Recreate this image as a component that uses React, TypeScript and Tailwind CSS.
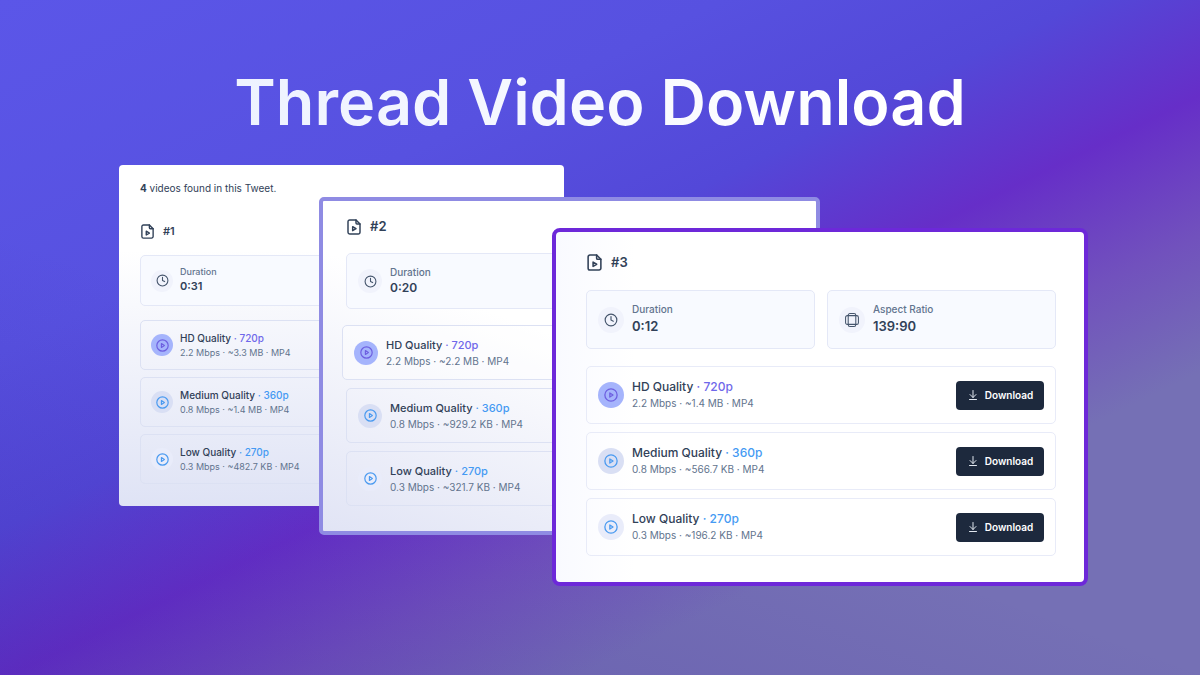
import { ArrowDownToLine, Clock } from 'lucide-react';
import clsx from 'clsx';

type Size = 'sm' | 'md' | 'lg';
type Tone = 'hd' | 'medium' | 'low';

interface Quality {
  tone: Tone;
  label: string;
  resolution: string;
  details: string;
  active?: boolean;
}

interface Video {
  id: number;
  size: Size;
  duration: string;
  aspectRatio?: string;
  downloadable?: boolean;
  qualities: Quality[];
}

const videos: Video[] = [
  {
    id: 1,
    size: 'sm',
    duration: '0:31',
    qualities: [
      { tone: 'hd', label: 'HD Quality', resolution: '720p', details: '2.2 Mbps · ~3.3 MB · MP4' },
      { tone: 'medium', label: 'Medium Quality', resolution: '360p', details: '0.8 Mbps · ~1.4 MB · MP4' },
      { tone: 'low', label: 'Low Quality', resolution: '270p', details: '0.3 Mbps · ~482.7 KB · MP4' }
    ]
  },
  {
    id: 2,
    size: 'md',
    duration: '0:20',
    qualities: [
      { tone: 'hd', label: 'HD Quality', resolution: '720p', details: '2.2 Mbps · ~2.2 MB · MP4', active: true },
      { tone: 'medium', label: 'Medium Quality', resolution: '360p', details: '0.8 Mbps · ~929.2 KB · MP4' },
      { tone: 'low', label: 'Low Quality', resolution: '270p', details: '0.3 Mbps · ~321.7 KB · MP4' }
    ]
  },
  {
    id: 3,
    size: 'lg',
    duration: '0:12',
    aspectRatio: '139:90',
    downloadable: true,
    qualities: [
      { tone: 'hd', label: 'HD Quality', resolution: '720p', details: '2.2 Mbps · ~1.4 MB · MP4' },
      { tone: 'medium', label: 'Medium Quality', resolution: '360p', details: '0.8 Mbps · ~566.7 KB · MP4' },
      { tone: 'low', label: 'Low Quality', resolution: '270p', details: '0.3 Mbps · ~196.2 KB · MP4' }
    ]
  }
];

const sizes = {
  sm: {
    card: 'col-start-1 col-end-4 rounded bg-linear-to-b from-white from-25% to-[#dfe3f5] px-[21px] pt-4 pb-[22px]',
    heading: 'mb-[15px] h-[17px] gap-2 text-[11px]',
    fileIcon: 'size-[15px]',
    statGap: 'mb-[14px]',
    stat: 'h-[51px]',
    rows: 'gap-[7px]',
    row: 'h-[50px] border-[#dce1f3]',
    box: 'gap-[7px] px-[10px]',
    circle: 'size-[22px]',
    icon: 'size-[13px]',
    title: 'text-[10px] leading-[15px]',
    sub: 'text-[9px] leading-[14px]',
    value: 'text-[11px] leading-[15px]'
  },
  md: {
    card: 'col-start-2 col-end-5 mt-8 rounded-[5px] border-4 border-[#8f8be3] bg-linear-[20deg] from-[#e1e4f5] to-white to-55% px-[23px] pt-4 pb-[25px]',
    heading: 'mb-[17px] h-[19px] gap-2 text-[13px]',
    fileIcon: 'size-4',
    statGap: 'mb-4',
    stat: 'h-14',
    rows: 'gap-2',
    row: 'h-[55px] border-[#dce1f3]',
    box: 'gap-2 px-[11px]',
    circle: 'size-6',
    icon: 'size-[13px]',
    title: 'text-[11px] leading-4',
    sub: 'text-[10px] leading-4',
    value: 'text-xs leading-4'
  },
  lg: {
    card: 'col-start-3 col-end-6 mt-[63px] rounded-lg border-4 border-[#6d28d9] bg-linear-to-r from-[#f9faff] to-white to-15% pt-5 pr-7 pb-[26px] pl-[30px]',
    heading: 'mb-[17px] h-[21px] gap-2 text-[13px]',
    fileIcon: 'size-[17px]',
    statGap: 'mb-[17px]',
    stat: 'h-[59px]',
    rows: 'gap-2',
    row: 'h-[58px] border-[#e8ebf8]',
    box: 'gap-2 px-[11px]',
    circle: 'size-[26px]',
    icon: 'size-[14px]',
    title: 'text-xs leading-[17px]',
    sub: 'text-[10px] leading-[17px]',
    value: 'text-[13px] leading-[17px]'
  }
};

const tones = {
  hd: { circle: 'bg-[#a5b4fc]', icon: 'text-[#6d5fe0]', text: 'text-[#6f68ea]' },
  medium: { circle: 'bg-[#d9dff4]', icon: 'text-[#4a9af0]', text: 'text-[#459af3]' },
  low: { circle: 'bg-[#e9ecfa]', icon: 'text-[#4a9af0]', text: 'text-[#459af3]' }
};

const FileIcon = ({ className }: { className: string }) => (
  <svg className={className} viewBox="0 0 24 24" fill="none" stroke="currentColor" strokeWidth={2.2} strokeLinecap="round" strokeLinejoin="round">
    <path d="M15 1.5H5.5A2.5 2.5 0 0 0 3 4v16a2.5 2.5 0 0 0 2.5 2.5h13A2.5 2.5 0 0 0 21 20V7.5Z" />
    <path d="M15 1.5V6a1.5 1.5 0 0 0 1.5 1.5H21" />
    <path d="m10 11.5 5 3-5 3Z" />
  </svg>
);

const PlayIcon = ({ className }: { className: string }) => (
  <svg className={className} viewBox="0 0 24 24" fill="none" stroke="currentColor" strokeWidth={2.2} strokeLinecap="round" strokeLinejoin="round">
    <circle cx="12" cy="12" r="10.5" />
    <path d="m10 8.5 5.5 3.5-5.5 3.5Z" />
  </svg>
);

const RatioIcon = ({ className }: { className: string }) => (
  <svg className={className} viewBox="0 0 24 24" fill="none" stroke="currentColor" strokeWidth={1.8}>
    <rect x="5.5" y="1" width="13" height="22" rx="3" />
    <rect x="1" y="4.5" width="22" height="15" rx="3" />
  </svg>
);

interface StatProps {
  size: Size;
  label: string;
  value: string;
  icon: React.ElementType;
}

const Stat = ({ size, label, value, icon: Icon }: StatProps) => {
  const s = sizes[size];
  return (
    <div className={clsx('flex items-center rounded-[5px] border border-[#e4e8f7] bg-[#f8faff]', s.stat, s.box)}>
      <span className={clsx('flex shrink-0 items-center justify-center rounded-full bg-[#f1f3fc] text-slate-600', s.circle)}>
        <Icon className={s.icon} />
      </span>
      <div className="pb-[3px]">
        <p className={clsx('font-medium text-slate-500', s.sub)}>{label}</p>
        <p className={clsx('font-semibold text-slate-700', s.value)}>{value}</p>
      </div>
    </div>
  );
};

interface QualityRowProps {
  size: Size;
  quality: Quality;
  downloadable?: boolean;
}

const QualityRow = ({ size, quality, downloadable }: QualityRowProps) => {
  const s = sizes[size];
  const tone = tones[quality.tone];
  return (
    <li className={clsx('flex items-center rounded-[5px] border', s.row, s.box, quality.active && '-mx-1 bg-white/40')}>
      <span className={clsx('flex shrink-0 items-center justify-center rounded-full', s.circle, tone.circle)}>
        <PlayIcon className={clsx(s.icon, tone.icon)} />
      </span>
      <div className="grow">
        <h3 className={clsx('font-medium text-slate-700', s.title)}>
          {quality.label} <span className={tone.text}>· {quality.resolution}</span>
        </h3>
        <p className={clsx('text-slate-500', s.sub)}>{quality.details}</p>
      </div>
      {downloadable && (
        <button
          type="button"
          className="flex h-[29px] w-[88px] items-center justify-center gap-1.5 rounded bg-slate-800 text-[10px] font-semibold text-white"
        >
          <ArrowDownToLine className="size-3 text-slate-200" strokeWidth={2} />
          Download
        </button>
      )}
    </li>
  );
};

const VideoCard = ({ video }: { video: Video }) => {
  const s = sizes[video.size];
  return (
    <article className={clsx('row-start-1', s.card)}>
      {video.id === 1 && (
        <p className="mb-7 text-[10px] leading-[14px] text-slate-700">
          <b className="font-bold">{videos.length + 1}</b> videos found in this Tweet.
        </p>
      )}
      <h2 className={clsx('flex items-center font-semibold text-slate-700', s.heading)}>
        <FileIcon className={s.fileIcon} />
        #{video.id}
      </h2>
      <div className={clsx('grid grid-cols-2 gap-3', s.statGap)}>
        <Stat size={video.size} label="Duration" value={video.duration} icon={Clock} />
        {video.aspectRatio && (
          <Stat size={video.size} label="Aspect Ratio" value={video.aspectRatio} icon={RatioIcon} />
        )}
      </div>
      <ul className={clsx('flex flex-col', s.rows)}>
        {video.qualities.map((quality) => (
          <QualityRow key={quality.tone} size={video.size} quality={quality} downloadable={video.downloadable} />
        ))}
      </ul>
    </article>
  );
};

export default function App() {
  return (
    <main className="min-h-screen bg-[linear-gradient(20deg,#3a249f40_0%,#3a249f00_40%),linear-gradient(154deg,#5b56e8_0%,#5751e0_28%,#5348d8_42%,#662ec8_54%,#7151bd_65%,#7570b5_76%)] pt-[66px] pb-20 font-['Inter',sans-serif]">
      <h1 className="mb-[27px] bg-linear-to-r from-[#eef2ff] from-20% to-white to-75% bg-clip-text text-center text-[63px] leading-[72px] font-semibold text-transparent">
        Thread Video Download
      </h1>
      <div className="grid grid-cols-[minmax(0,200fr)_minmax(0,233fr)_minmax(0,12fr)_minmax(0,256fr)_minmax(0,268fr)] items-start pr-28 pl-[119px]">
        {videos.map((video) => (
          <VideoCard key={video.id} video={video} />
        ))}
      </div>
    </main>
  );
}
